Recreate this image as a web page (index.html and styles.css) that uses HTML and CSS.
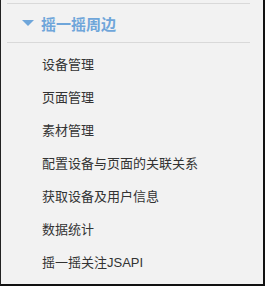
FILE: index.html
```html
<!DOCTYPE html>
<html lang="zh-CN">
<head>
    <meta charset="UTF-8">
    <title>摇一摇周边</title>
    <link rel="stylesheet" href="styles.css">
</head>
<body>
    <div class="sidebar">
        <div class="menu-group">
            <div class="menu-title">
                <span class="arrow"></span>
                <span>摇一摇周边</span>
            </div>
            <ul class="menu-list">
                <li>设备管理</li>
                <li>页面管理</li>
                <li>素材管理</li>
                <li>配置设备与页面的关联关系</li>
                <li>获取设备及用户信息</li>
                <li>数据统计</li>
                <li>摇一摇关注JSAPI</li>
            </ul>
        </div>
    </div>
</body>
</html>
```

FILE: styles.css
```css
* {
    margin: 0;
    padding: 0;
    box-sizing: border-box;
}

body {
    font-family: "Liberation Sans", "Noto Sans CJK SC", sans-serif;
    background: #f2f2f2;
}

.sidebar {
    width: 265px;
    height: 286px;
    background: #f2f2f2;
    border-left: 1px solid #222;
    border-right: 2px solid #111;
    border-bottom: 2px solid #111;
    padding: 3px 13px 0 6px;
}

/* 标题 */
.menu-title {
    display: flex;
    align-items: center;
    height: 40px;
    border-top: 1px solid #d9d9d9;
    border-bottom: 1px solid #d9d9d9;
    padding-left: 15px;
    font-size: 15px;
    font-weight: bold;
    color: #6fa6da;
}
.arrow {
    width: 0;
    height: 0;
    border-left: 6px solid transparent;
    border-right: 6px solid transparent;
    border-top: 6px solid #6fa6da;
    margin-right: 7px;
}

/* 菜单项 */
.menu-list {
    list-style: none;
    padding-top: 5px;
}
.menu-list li {
    height: 33px;
    line-height: 33px;
    padding-left: 35px;
    font-size: 13px;
    color: #333;
}
```
